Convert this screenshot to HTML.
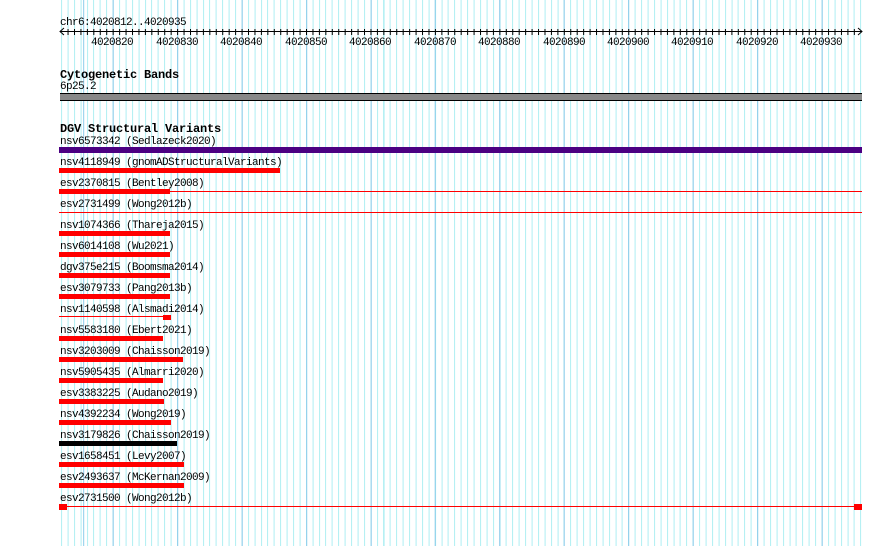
<!DOCTYPE html>
<html><head><meta charset="utf-8"><style>
html,body{margin:0;padding:0;background:#fff;width:890px;height:546px;overflow:hidden}
#g1{position:absolute;left:60px;top:0;width:803px;height:546px;
background:repeating-linear-gradient(to right,#aeeef2 0 1px,transparent 1px 6.445px);background-position:1.1px 0}
#g2{position:absolute;left:60px;top:0;width:803px;height:546px;
background:repeating-linear-gradient(to right,#8ccbea 0 1px,transparent 1px 64.45px);background-position:52.7px 0}
svg{position:absolute;left:0;top:0}
text{font-family:"Liberation Mono","DejaVu Sans Mono",monospace;font-size:11px;letter-spacing:-0.6px;fill:#000}
.b{font-weight:bold;font-size:12px;letter-spacing:-0.2px}
</style></head><body>
<div id="g1"></div><div id="g2"></div>
<svg width="890" height="546" xmlns="http://www.w3.org/2000/svg">
<defs>
<pattern id="tk" patternUnits="userSpaceOnUse" width="6.445" height="8" x="61.1" y="28">
<rect x="0" y="1" width="1" height="7" fill="#000"/></pattern>
</defs>
<text x="60" y="25">chr6:4020812..4020935</text>
<rect x="60" y="31" width="802" height="1" fill="#000"/>
<rect x="62" y="28" width="798" height="7" fill="url(#tk)"/>
<path d="M64 28 L60 31.5 L64 35 M858 28 L862 31.5 L858 35" stroke="#000" fill="none"/>
<g text-anchor="middle">
<text x="112" y="45">4020820</text><text x="177" y="45">4020830</text><text x="241" y="45">4020840</text>
<text x="306" y="45">4020850</text><text x="370" y="45">4020860</text><text x="435" y="45">4020870</text>
<text x="499" y="45">4020880</text><text x="564" y="45">4020890</text><text x="628" y="45">4020900</text>
<text x="692" y="45">4020910</text><text x="757" y="45">4020920</text><text x="821" y="45">4020930</text>
</g>
<text class="b" x="60" y="78">Cytogenetic Bands</text>
<text x="60" y="89">6p25.2</text>
<rect x="60" y="93" width="802" height="8" fill="#000"/>
<rect x="60" y="94" width="802" height="6" fill="#888"/>
<text class="b" x="60" y="132">DGV Structural Variants</text>

<text x="60" y="144">nsv6573342 (Sedlazeck2020)</text>
<rect x="59" y="147" width="803" height="6" fill="#4b0082"/>
<text x="60" y="165">nsv4118949 (gnomADStructuralVariants)</text>
<rect x="59" y="168" width="221" height="5" fill="#f00"/>
<text x="60" y="186">esv2370815 (Bentley2008)</text>
<rect x="59" y="189" width="111" height="5" fill="#f00"/><rect x="59" y="191" width="803" height="1" fill="#f00"/>
<text x="60" y="207">esv2731499 (Wong2012b)</text>
<rect x="59" y="212" width="803" height="1" fill="#f00"/>
<text x="60" y="228">nsv1074366 (Thareja2015)</text>
<rect x="59" y="231" width="111" height="5" fill="#f00"/>
<text x="60" y="249">nsv6014108 (Wu2021)</text>
<rect x="59" y="252" width="111" height="5" fill="#f00"/>
<text x="60" y="270">dgv375e215 (Boomsma2014)</text>
<rect x="59" y="273" width="111" height="5" fill="#f00"/>
<text x="60" y="291">esv3079733 (Pang2013b)</text>
<rect x="59" y="294" width="111" height="5" fill="#f00"/>
<text x="60" y="312">nsv1140598 (Alsmadi2014)</text>
<rect x="59" y="316" width="104" height="1" fill="#f00"/><rect x="163" y="315" width="8" height="5" fill="#f00"/>
<text x="60" y="333">nsv5583180 (Ebert2021)</text>
<rect x="59" y="336" width="104" height="5" fill="#f00"/>
<text x="60" y="354">nsv3203009 (Chaisson2019)</text>
<rect x="59" y="357" width="124" height="5" fill="#f00"/>
<text x="60" y="375">nsv5905435 (Almarri2020)</text>
<rect x="59" y="378" width="104" height="5" fill="#f00"/>
<text x="60" y="396">esv3383225 (Audano2019)</text>
<rect x="59" y="399" width="105" height="5" fill="#f00"/>
<text x="60" y="417">nsv4392234 (Wong2019)</text>
<rect x="59" y="420" width="112" height="5" fill="#f00"/>
<text x="60" y="438">nsv3179826 (Chaisson2019)</text>
<rect x="59" y="441" width="118" height="5" fill="#000"/>
<text x="60" y="459">esv1658451 (Levy2007)</text>
<rect x="59" y="462" width="125" height="5" fill="#f00"/>
<text x="60" y="480">esv2493637 (McKernan2009)</text>
<rect x="59" y="483" width="125" height="5" fill="#f00"/>
<text x="60" y="501">esv2731500 (Wong2012b)</text>
<rect x="59" y="506" width="803" height="1" fill="#f00"/>
<rect x="59" y="504" width="8" height="6" fill="#f00"/><rect x="854" y="504" width="8" height="6" fill="#f00"/>
</svg>
</body></html>
